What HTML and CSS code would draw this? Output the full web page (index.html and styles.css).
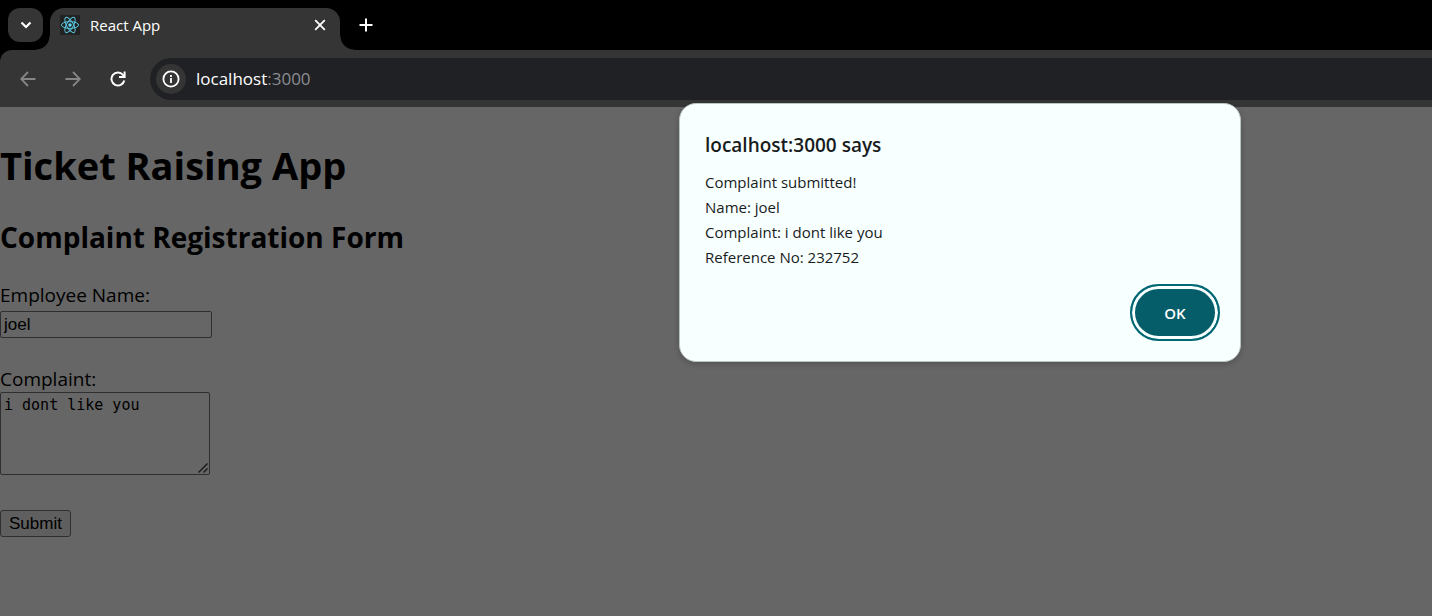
FILE: index.html
```html
<!DOCTYPE html>
<html lang="en">
<head>
<meta charset="utf-8">
<title>React App</title>
<link rel="stylesheet" href="styles.css">
</head>
<body>
<div class="browser">
  <header class="chrome">
    <div class="tab-strip">
      <button class="tab-search" aria-label="Search tabs">
        <svg width="12" height="8" viewBox="0 0 12 8"><path d="M1.500 1.500 6 6l4.500-4.500" fill="none" stroke="#fff" stroke-width="2.200"/></svg>
      </button>
      <div class="tab">
        <svg class="favicon" width="20" height="20" viewBox="0 0 20 20">
          <rect width="20" height="20" rx="1" fill="#222"/>
          <g fill="none" stroke="#58c4dc" stroke-width="1">
            <ellipse cx="10" cy="10" rx="8.600" ry="3.400"/>
            <ellipse cx="10" cy="10" rx="8.600" ry="3.400" transform="rotate(60 10 10)"/>
            <ellipse cx="10" cy="10" rx="8.600" ry="3.400" transform="rotate(120 10 10)"/>
          </g>
          <circle cx="10" cy="10" r="1.700" fill="#61dafb"/>
        </svg>
        <span class="tab-title">React App</span>
        <button class="icon-button" aria-label="Close tab">
          <svg width="12" height="12" viewBox="0 0 12 12"><path d="m1.200 1.200 9.600 9.600m0-9.600-9.600 9.600" stroke="#fff" stroke-width="1.800"/></svg>
        </button>
      </div>
      <button class="icon-button new-tab" aria-label="New tab">
        <svg width="14" height="14" viewBox="0 0 14 14"><path d="M7 .5v13M.5 7h13" stroke="#fff" stroke-width="2"/></svg>
      </button>
    </div>
    <nav class="toolbar">
      <button class="icon-button" aria-label="Back">
        <svg width="16" height="16" viewBox="0 0 16 16"><path d="M15.500 8H1.500M8 1 1.200 8 8 15" fill="none" stroke="#858585" stroke-width="1.800"/></svg>
      </button>
      <button class="icon-button" aria-label="Forward">
        <svg width="16" height="16" viewBox="0 0 16 16"><path d="M.5 8h14M8 1l6.800 7L8 15" fill="none" stroke="#858585" stroke-width="1.800"/></svg>
      </button>
      <button class="icon-button" aria-label="Reload">
        <svg width="16" height="16" viewBox="0 0 16 16"><path d="M14.300 9.500A6.500 6.500 0 1 1 13 3.800L14.500 5.500" fill="none" stroke="#fff" stroke-width="2"/><path d="M14.600.500V6H9" fill="none" stroke="#fff" stroke-width="2"/></svg>
      </button>
      <div class="address-bar">
        <button class="site-info" aria-label="View site information">
          <svg width="18" height="18" viewBox="0 0 18 18"><circle cx="9" cy="9" r="7.600" fill="none" stroke="#fff" stroke-width="1.800"/><path d="M9 8v5M9 5v2" stroke="#fff" stroke-width="1.800"/></svg>
        </button>
        <span class="url">localhost<span class="port">:3000</span></span>
      </div>
    </nav>
  </header>
  <main class="page">
    <h1 class="title">Ticket Raising App</h1>
    <h2 class="subtitle">Complaint Registration Form</h2>
    <form class="form">
      <div class="field">
        <label class="label" for="name">Employee Name:</label>
        <input class="text-input" id="name" type="text" value="joel">
      </div>
      <div class="field">
        <label class="label" for="complaint">Complaint:</label>
        <div class="textarea-wrap">
          <textarea class="textarea" id="complaint">i dont like you</textarea>
          <svg class="grip" width="10" height="10" viewBox="0 0 10 10"><path d="M.5 9.500 9.500.5M5.500 9.500l4-4" stroke="#181818" stroke-width="1.400"/></svg>
        </div>
      </div>
      <button class="submit" type="button">Submit</button>
    </form>
  </main>
  <section class="dialog" role="alertdialog" aria-labelledby="dialog-title">
    <h2 class="dialog-title" id="dialog-title">localhost:3000 says</h2>
    <p class="dialog-text">Complaint submitted!<br>Name: joel<br>Complaint: i dont like you<br>Reference No: 232752</p>
    <button class="ok">OK</button>
  </section>
</div>
</body>
</html>
```
FILE: styles.css
```css
* {
  box-sizing: border-box;
}

body {
  margin: 0;
  background: #666;
  color: #000;
  font-family: "Open Sans", "Noto Sans", sans-serif;
}

button {
  font-family: inherit;
  cursor: pointer;
}

.browser {
  position: relative;
  min-height: 100vh;
}

.chrome {
  background: #000;
}

.tab-strip {
  display: flex;
  align-items: flex-start;
  height: 50px;
  padding: 8px 8px 0;
}

.tab-search {
  display: flex;
  align-items: center;
  justify-content: center;
  width: 35px;
  height: 34px;
  padding: 0;
  border: 0;
  border-radius: 12px;
  background: #353535;
}

.tab {
  position: relative;
  display: flex;
  align-items: center;
  gap: 10px;
  width: 290px;
  height: 42px;
  margin-left: 7px;
  padding: 0 14px 8px 10px;
  border-radius: 14px 14px 0 0;
  background: #353535;
}

.tab::before,
.tab::after {
  content: "";
  position: absolute;
  bottom: 0;
  width: 14px;
  height: 14px;
}

.tab::before {
  right: 100%;
  background: radial-gradient(circle at 0 0, transparent 13px, #353535 14px);
}

.tab::after {
  left: 100%;
  background: radial-gradient(circle at 100% 0, transparent 13px, #353535 14px);
}

.tab-title {
  flex: 1;
  color: #fff;
  font-size: 15px;
  line-height: 20px;
}

.icon-button {
  display: flex;
  padding: 0;
  border: 0;
  background: none;
}

.new-tab {
  margin: 10px 0 0 19px;
}

.toolbar {
  display: flex;
  align-items: center;
  gap: 29px;
  padding: 8px 0 7px 20px;
  border-radius: 12px 0 0 0;
  background: #353535;
}

.address-bar {
  display: flex;
  flex: 1;
  align-items: center;
  gap: 10px;
  height: 42px;
  margin-left: -5px;
  padding-left: 6px;
  border-radius: 21px 0 0 21px;
  background: #202124;
}

.site-info {
  display: flex;
  align-items: center;
  justify-content: center;
  width: 30px;
  height: 30px;
  padding: 0;
  border: 0;
  border-radius: 50%;
  background: #353535;
}

.url {
  color: #fff;
  font-size: 17px;
  line-height: 24px;
}

.port {
  color: #8b8d92;
}

.page {
  padding-top: 31px;
}

.title {
  margin: 0;
  font-size: 38px;
  line-height: 54px;
}

.subtitle {
  margin: 25px 0 26px;
  font-size: 28px;
  line-height: 40px;
}

.form {
  display: flex;
  flex-direction: column;
  align-items: flex-start;
  gap: 29px;
}

.field {
  display: flex;
  flex-direction: column;
}

.label {
  font-size: 19px;
  line-height: 25px;
}

.text-input {
  width: 212px;
  height: 27px;
  margin-top: 3px;
  padding: 1px 3px;
  border: 1px solid #2f2f2f;
  border-radius: 2px;
  background: #666;
  color: #000;
  font: 17px "Liberation Sans", sans-serif;
}

.textarea-wrap {
  position: relative;
  display: flex;
}

.textarea {
  width: 210px;
  height: 83px;
  padding: 3px;
  border: 1px solid #2f2f2f;
  border-radius: 2px;
  background: #666;
  color: #000;
  font: 15px/19px "DejaVu Sans Mono", monospace;
  resize: none;
}

.grip {
  position: absolute;
  right: 2px;
  bottom: 2px;
}

.submit {
  height: 27px;
  margin-top: 6px;
  padding: 1px 8px;
  border: 1px solid #2f2f2f;
  border-radius: 3px;
  background: #5f5f5f;
  color: #000;
  font: 17px "Liberation Sans", sans-serif;
}

.dialog {
  position: absolute;
  top: 103px;
  left: 679px;
  display: flex;
  flex-direction: column;
  width: 562px;
  padding: 28px 20px 20px 25px;
  border: 1px solid #b9c4c5;
  border-radius: 17px;
  background: #f8ffff;
  box-shadow: 0 2px 6px rgba(0, 0, 0, 0.2);
  color: #191c1d;
}

.dialog-title {
  margin: 0 0 11px;
  font-size: 19px;
  font-weight: 600;
  line-height: 27px;
}

.dialog-text {
  margin: 0 0 14px;
  font-size: 15px;
  line-height: 25px;
}

.ok {
  align-self: flex-end;
  width: 90px;
  height: 57px;
  padding: 0;
  border: 2px solid #006874;
  border-radius: 29px;
  background: #045d68;
  box-shadow: inset 0 0 0 3px #f8ffff;
  color: #fff;
  font-size: 15px;
  font-weight: 600;
}
```
